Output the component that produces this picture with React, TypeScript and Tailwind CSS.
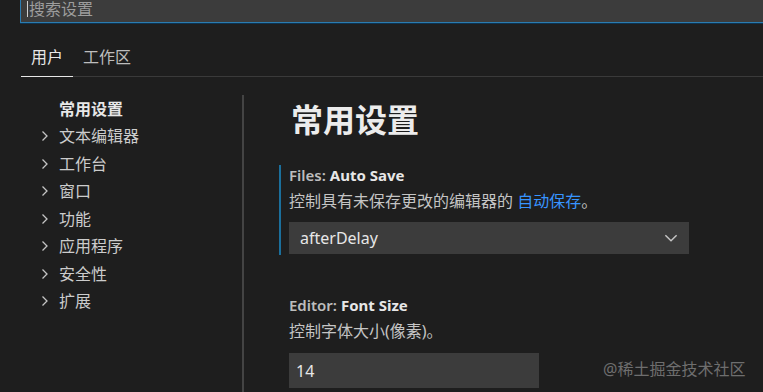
import React from "react";

function Chevron() {
  return (
    <svg width="16" height="16" viewBox="0 0 16 16" fill="none">
      <path d="M5.5 3.5 L10 8 L5.5 12.5" stroke="#c5c5c5" strokeWidth="1.3" />
    </svg>
  );
}

const items = ["文本编辑器", "工作台", "窗口", "功能", "应用程序", "安全性", "扩展"];

export default function App() {
  return (
    <div
      className="relative w-[763px] h-[392px] overflow-hidden bg-[#1e1e1e] text-[#cccccc]"
      style={{ fontFamily: '"Noto Sans", "Noto Sans CJK SC", sans-serif' }}
    >
      {/* search */}
      <div className="ml-[20px] h-[23px] bg-[#3c3c3c] border-l border-b border-[#2b7cb0] shadow-[0_1px_0_#0d3350] flex items-start">
        <div className="ml-[6px] mt-[1px] w-px h-[16px] bg-[#cfcfcf]" />
        <span className="ml-px text-[16px] leading-[18px] text-[#9d9d9d]">搜索设置</span>
      </div>

      {/* tabs */}
      <div className="mt-[23px] ml-[21px] flex border-b border-[#3a3a3a] h-[31px]">
        <div className="px-[10px] text-[16px] leading-[22px] text-[#e7e7e7] border-b border-[#e7e7e7] -mb-px">
          用户
        </div>
        <div className="px-[10px] text-[16px] leading-[22px] text-[#bdbdbd]">工作区</div>
      </div>

      {/* body */}
      <div className="flex mt-[18px] h-[300px]">
        <div className="w-[242px] shrink-0">
          <div className="h-[27.5px] flex items-center pl-[59px] text-[16px] font-bold text-[#e7e7e7]">
            常用设置
          </div>
          {items.map((t) => (
            <div key={t} className="h-[27.5px] flex items-center pl-[37px] text-[16px] text-[#cccccc]">
              <Chevron />
              <span className="ml-[6px]">{t}</span>
            </div>
          ))}
        </div>
        <div className="w-[2px] bg-[#444444] shrink-0" />
        <div className="pl-[35px] flex-1">
          <div className="mt-[4px] ml-[12px] text-[32px] leading-[42px] font-bold text-[#ececec]">常用设置</div>

          <div className="mt-[24px] border-l-2 border-[#1b6f9c] pl-[8px] pb-[1px]">
            <div className="text-[15px] leading-[20px] text-[#cccccc]">
              <span className="font-semibold text-[#bdbdbd]">Files: </span>
              <span className="font-bold text-[#e7e7e7]">Auto Save</span>
            </div>
            <div className="mt-[6px] text-[16px] leading-[20px] text-[#c4c4c4]">
              控制具有未保存更改的编辑器的 <span className="text-[#3794ff]">自动保存</span>。
            </div>
            <div className="mt-[11px] w-[400px] h-[32px] bg-[#3c3c3c] flex items-center justify-between pl-[11px] pr-[9px]">
              <span className="text-[16px] text-[#e7e7e7]">afterDelay</span>
              <svg width="18" height="18" viewBox="0 0 16 16" fill="none">
                <path d="M3 5.5 L8 10.5 L13 5.5" stroke="#c5c5c5" strokeWidth="1.3" />
              </svg>
            </div>
          </div>

          <div className="mt-[40px] pl-[10px]">
            <div className="text-[15px] leading-[20px]">
              <span className="font-semibold text-[#bdbdbd]">Editor: </span>
              <span className="font-bold text-[#e7e7e7]">Font Size</span>
            </div>
            <div className="mt-[6px] text-[16px] leading-[20px] text-[#c4c4c4]">控制字体大小(像素)。</div>
            <div className="mt-[12px] w-[250px] h-[35px] bg-[#3c3c3c] flex items-center pl-[7px]">
              <span className="text-[16px] text-[#e7e7e7]">14</span>
            </div>
          </div>
        </div>
      </div>

      <div className="absolute left-[603px] top-[358px] text-[16px] leading-[22px] text-[#6e6e6e]">
        @稀土掘金技术社区
      </div>
    </div>
  );
}
